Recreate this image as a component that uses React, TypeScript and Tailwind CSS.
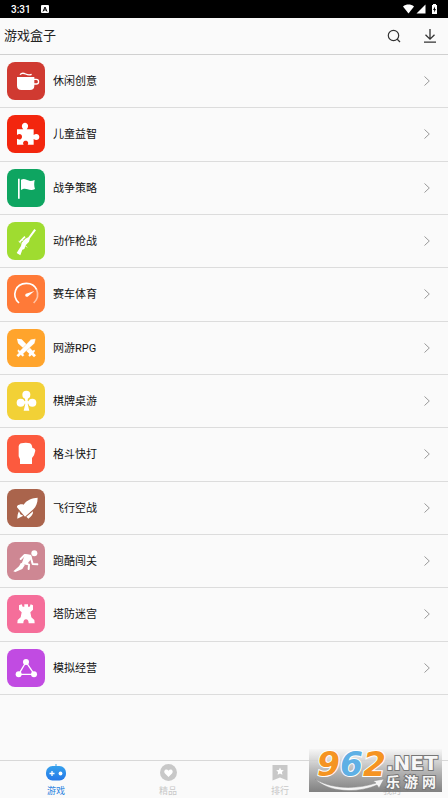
import type { ReactNode } from 'react';

type Category = {
  name: string;
  color: string;
  icon: ReactNode;
};

const categories: Category[] = [
  {
    name: '休闲创意',
    color: 'bg-[#d03a31]',
    icon: (
      <>
        <path fill="#fff" d="M30 45h52v26c0 9-5 13-13 13H43c-8 0-13-4-13-13z" />
        <path fill="none" stroke="#fff" strokeWidth="4" d="M81 52h7c9 0 9 14 0 14h-7M39 38c6-7 11-5 17-2s11 4 18 1" />
      </>
    ),
  },
  {
    name: '儿童益智',
    color: 'bg-[#f3260e]',
    icon: (
      <path
        fill="#fff"
        d="M30 43h19c-8-8-4-20 5-20s13 12 5 20h21v17c7-6 17-3 17 6s-10 12-17 6v17H62c4-7 0-12-6-12s-10 5-6 12H30V71c7 5 15 2 15-6s-8-11-15-5z"
      />
    ),
  },
  {
    name: '战争策略',
    color: 'bg-[#0ea561]',
    icon: (
      <>
        <path fill="#fff" d="M33 29h5v60h-5z" />
        <path fill="#fff" d="M42 32c9-5 15-1 21 2s12 2 20-1c-2 10-2 18 1 27-8 5-16 3-22 1s-12-3-20 2z" />
      </>
    ),
  },
  {
    name: '动作枪战',
    color: 'bg-[#9fdc30]',
    icon: (
      <>
        <path fill="#fff" d="M82 21l5 4-18 24-3 10-10 11-4 11-6 2-6 17-11-7 13-21 2-10 11-12 9-4z" />
        <path stroke="#fff" strokeWidth="5" d="M38 60l16-16" />
        <path stroke="#fff" strokeWidth="3" d="M35 58l6 5M46 54l6 6M54 70l6 6" />
      </>
    ),
  },
  {
    name: '赛车体育',
    color: 'bg-[#ff7a38]',
    icon: (
      <>
        <path fill="none" stroke="#fff" strokeWidth="5" d="M36 84C12 62 25 25 58 25c15 0 26 7 31 19" />
        <path fill="none" stroke="#fff" strokeWidth="5" opacity=".55" d="M89 44c6 15 3 29-9 40" />
        <path fill="#fff" d="M82 48L62 65c-6 2-10-5-5-9z" />
      </>
    ),
  },
  {
    name: '网游RPG',
    color: 'bg-[#ffa42c]',
    icon: (
      <>
        <path fill="#fff" d="M30 29l14 2 33 34 5-3 2 4-4 6 7 7-6 6-7-7-6 5-4-4 3-5-34-31z" />
        <path fill="#fff" stroke="#ffa42c" d="M86 29l-14 2-33 34-5-4-3 5 4 6-7 7 6 6 7-7 6 5 5-4-3-5 34-31z" />
      </>
    ),
  },
  {
    name: '棋牌桌游',
    color: 'bg-[#f2d136]',
    icon: (
      <>
        <circle cx="58" cy="38" r="12" fill="#fff" />
        <circle cx="41" cy="62" r="12" fill="#fff" />
        <circle cx="76" cy="62" r="12" fill="#fff" />
        <path fill="#fff" d="M53 46h10l-1 11 10 2v6H62l5 21H50l5-21H45v-6l10-2z" />
      </>
    ),
  },
  {
    name: '格斗快打',
    color: 'bg-[#fc5a3e]',
    icon: (
      <path
        fill="#fff"
        d="M43 25c8-2 19-2 26 0 4 2 6 6 7 13 5 1 9 4 9 9l-4 14-6 8v18H39V73l-4-9V34c1-5 4-8 8-9z"
      />
    ),
  },
  {
    name: '飞行空战',
    color: 'bg-[#aa644c]',
    icon: (
      <>
        <path fill="#fff" d="M92 26c0 16-5 27-13 35L54 83 30 55c-1-4 2-7 7-8 5-2 9-1 13 0 10-15 26-20 42-21z" />
        <path fill="#fff" d="M36 67l4 9 9 4-18 9c0-8 1-15 5-22zM78 67c1 9-5 16-14 22l-6-6z" />
      </>
    ),
  },
  {
    name: '跑酷闯关',
    color: 'bg-[#ce8793]',
    icon: (
      <>
        <circle cx="82" cy="34" r="9" fill="#fff" />
        <path
          fill="none"
          stroke="#fff"
          strokeLinejoin="round"
          strokeLinecap="round"
          strokeWidth="6"
          d="M41 51l12-12 17 2 7 25 14 1M53 63l13 5-1 13"
        />
        <path fill="#fff" d="M54 37l18 3 2 9-15 19-15-3z" />
        <path fill="#fff" d="M42 62l12 6-8 13-21 9-6-2 17-15z" />
      </>
    ),
  },
  {
    name: '塔防迷宫',
    color: 'bg-[#f56e9a]',
    icon: (
      <path
        fill="#fff"
        d="M36 31l8-3 3 7h5v-7h11v7h5l3-7 7 3v13l-8 8 3 15 9 8 1 10H65c0-8-3-12-8-12s-8 4-8 12H31l1-10 9-8 3-15-8-8z"
      />
    ),
  },
  {
    name: '模拟经营',
    color: 'bg-[#c14be2]',
    icon: (
      <>
        <path fill="none" stroke="#fff" strokeWidth="4" d="M57 39L35 76h47z" />
        <circle cx="57" cy="39" r="9" fill="#fff" />
        <circle cx="35" cy="76" r="9" fill="#fff" />
        <circle cx="81" cy="76" r="9" fill="#fff" />
      </>
    ),
  },
];

function StatusBar() {
  return (
    <div className="flex h-[18px] items-center bg-black pr-2 pl-[11px] text-white">
      <span className="pt-px font-['Roboto',sans-serif] text-[10px] leading-4 font-medium">3:31</span>
      <svg viewBox="0 0 8 8" className="ml-[10px] size-2">
        <rect width="8" height="8" rx="1" fill="#fff" />
        <path d="M2 6.500L4 2l2 4.500M3 5h2" fill="none" stroke="#000" />
      </svg>
      <svg viewBox="0 0 38 12" className="ml-auto h-3 w-[38px]">
        <path fill="#fff" d="M1 3.500c3.200-2.600 7.800-2.600 11 0L6.500 10.500z" />
        <path fill="#fff" d="M23.500 1.500v9h-9z" />
        <path fill="#fff" d="M31 1h3v1h1v9h-5V2h1z" />
        <path fill="#000" d="M33 3.500L31 7h1.200v2.500L34 6h-1z" />
      </svg>
    </div>
  );
}

function Header() {
  return (
    <header className="flex h-[37px] items-center border-b border-[#d0d0d0] pr-[11px] pl-1">
      <h1 className="text-[13px] leading-5 text-[#222]">游戏盒子</h1>
      <button type="button" aria-label="搜索" className="ml-auto">
        <svg viewBox="0 0 14 14" className="size-[14px]" fill="none" stroke="#333" strokeWidth="1.2">
          <circle cx="6.500" cy="6.500" r="5.200" />
          <path d="M10 10l3 3" />
        </svg>
      </button>
      <button type="button" aria-label="下载" className="ml-[22px]">
        <svg viewBox="0 0 14 14" className="size-[14px]" fill="none" stroke="#333" strokeWidth="1.300">
          <path d="M7 0v10M2.500 5.800L7 10.200l4.500-4.400M1 13.200h12" />
        </svg>
      </button>
    </header>
  );
}

function CategoryRow({ name, color, icon }: Category) {
  return (
    <li className="border-b border-[#dcdcdc]">
      <a href="#" className="flex h-full items-center pr-[18px] pl-[7px]">
        <svg viewBox="0 0 114 114" className={`size-[38px] rounded-lg ${color}`}>
          {icon}
        </svg>
        <span className="ml-2 pt-0.5 text-[11px] leading-4 text-[#111]">{name}</span>
        <svg viewBox="0 0 6 10" className="ml-auto h-[10px] w-[6px]" fill="none" stroke="#999">
          <path d="M.5.5L5.300 5 .5 9.500" />
        </svg>
      </a>
    </li>
  );
}

function TabBar() {
  return (
    <nav className="grid h-[38px] grid-cols-4 border-t border-[#d8d8d8] text-[9px] leading-3 text-[#c8c8c8]">
      <a href="#" className="flex flex-col items-center pt-[3px] text-[#2a82e0]">
        <svg viewBox="0 0 20 17" className="h-[17px] w-5">
          <defs>
            <linearGradient id="pad" x1="0" y1="0" x2="0" y2="1">
              <stop offset="0" stopColor="#35a0ec" />
              <stop offset="1" stopColor="#2478e8" />
            </linearGradient>
          </defs>
          <path d="M9.500 0h1v3h-1z" fill="#35a0ec" />
          <rect y="2" width="20" height="14.500" rx="6.500" fill="url(#pad)" />
          <path d="M3.500 9.500h5M6 7v5" stroke="#fff" strokeWidth="1.300" />
          <circle cx="14.500" cy="9.500" r="1.900" fill="#fff" />
        </svg>
        <span className="mt-1">游戏</span>
      </a>
      <a href="#" className="flex flex-col items-center pt-[3px]">
        <svg viewBox="0 0 17 17" className="size-[17px]">
          <circle cx="8.500" cy="8.500" r="8.500" fill="#c8c8c8" />
          <path d="M8.500 13L5 9.500C2.700 6.500 6.500 4 8.500 6.700 10.500 4 14.300 6.500 12 9.500z" fill="#fff" />
        </svg>
        <span className="mt-1">精品</span>
      </a>
      <a href="#" className="flex flex-col items-center pt-[3px]">
        <svg viewBox="0 0 16 17" className="h-[17px] w-4">
          <path d="M.5 1h15v15.500L8 13.500.5 16.500z" fill="#c8c8c8" />
          <path d="M8 3.500l1.200 2.400 2.600.3-1.900 1.900.5 2.600L8 9.500l-2.400 1.200.5-2.600-1.900-1.900 2.600-.3z" fill="#fff" />
        </svg>
        <span className="mt-1">排行</span>
      </a>
      <a href="#" className="flex flex-col items-center pt-[3px]">
        <svg viewBox="0 0 17 17" className="size-[17px]">
          <circle cx="8.500" cy="5" r="4" fill="#c8c8c8" />
          <path d="M1 16c0-8 15-8 15 0z" fill="#c8c8c8" />
        </svg>
        <span className="mt-1">我的</span>
      </a>
    </nav>
  );
}

function SiteBadge() {
  return (
    <div className="absolute right-[6px] bottom-[6px] h-[43px] w-[133px]">
      <svg viewBox="0 0 133 43" className="size-full overflow-visible" role="img" aria-label="962.NET 乐游网">
        <defs>
          <linearGradient id="shade" x1="0" y1="0" x2="0" y2="1">
            <stop offset="0" stopColor="#f5f5f5" stopOpacity=".8" />
            <stop offset=".5" stopColor="#b0b0b0" stopOpacity=".9" />
            <stop offset="1" stopColor="#6c6c6c" stopOpacity=".85" />
          </linearGradient>
        </defs>
        <rect width="133" height="43" fill="url(#shade)" />
        <path
          d="M6 30c18 11 43 10 61 4l-3-2 11-2-5 9-2-3C47 45 19 43 6 30z"
          fill="#f4f4f4"
          stroke="#888"
          strokeWidth=".5"
        />
        <text
          x="8"
          y="27"
          fontSize="33"
          fontWeight="700"
          fontStyle="italic"
          fontFamily="DejaVu Sans, sans-serif"
          stroke="#fff"
          strokeWidth="2"
          paintOrder="stroke"
        >
          <tspan fill="#f59422">9</tspan>
          <tspan fill="#5eb0e5">6</tspan>
          <tspan fill="#f59422">2</tspan>
        </text>
        <g fill="#f7f7f7" stroke="#777" strokeWidth="2" paintOrder="stroke" fontWeight="700">
          <text x="77" y="21" fontSize="20" fontFamily="DejaVu Sans, sans-serif">.NET</text>
          <text x="77" y="38" fontSize="14" fontFamily="Noto Sans CJK SC, sans-serif">乐</text>
          <text x="95" y="38" fontSize="14" fontFamily="Noto Sans CJK SC, sans-serif">游</text>
          <text x="113" y="38" fontSize="14" fontFamily="Noto Sans CJK SC, sans-serif">网</text>
        </g>
      </svg>
    </div>
  );
}

export default function App() {
  return (
    <div className="relative flex min-h-screen flex-col bg-[#fafafa] font-['Roboto','Noto_Sans_CJK_SC',sans-serif]">
      <StatusBar />
      <Header />
      <main className="flex-1">
        <ul className="grid h-160 grid-rows-12">
          {categories.map((category) => (
            <CategoryRow key={category.name} {...category} />
          ))}
        </ul>
      </main>
      <TabBar />
      <SiteBadge />
    </div>
  );
}
